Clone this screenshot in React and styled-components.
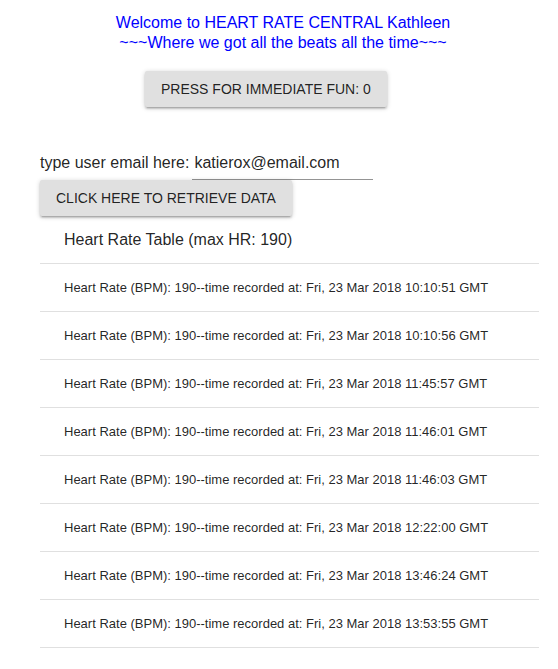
import React, { useState } from 'react';
import styled, { createGlobalStyle } from 'styled-components';

const GlobalStyle = createGlobalStyle`
  body {
    margin: 0;
    background: #ffffff;
    font-family: "Liberation Sans", Arial, sans-serif;
    color: rgba(0, 0, 0, 0.87);
  }
`;

const Page = styled.div`
  display: flex;
  flex-direction: column;
  width: 558px;
  padding-top: 13px;
`;

const Title = styled.div`
  padding-left: 8px;
  text-align: center;
  color: #0000ff;
  font-size: 16px;
  line-height: 20px;
`;

const FunRow = styled.div`
  display: flex;
  padding-left: 145px;
  margin-top: 18px;
`;

const RaisedButton = styled.button`
  height: 36px;
  padding: 0 16px;
  border: none;
  border-radius: 2px;
  background: #e0e0e0;
  color: rgba(0, 0, 0, 0.87);
  font-family: inherit;
  font-size: 14px;
  text-transform: uppercase;
  box-shadow: 0 1px 5px rgba(0, 0, 0, 0.2), 0 2px 2px rgba(0, 0, 0, 0.14),
    0 3px 1px -2px rgba(0, 0, 0, 0.12);
  cursor: pointer;
`;

const Content = styled.div`
  display: flex;
  flex-direction: column;
  align-items: flex-start;
  padding: 0 19px 0 40px;
  margin-top: 46px;
`;

const EmailRow = styled.label`
  display: flex;
  align-items: baseline;
  gap: 3px;
  font-size: 16px;
  line-height: 20px;
`;

const EmailInput = styled.input`
  width: 179px;
  border: none;
  border-bottom: 1px solid rgba(0, 0, 0, 0.42);
  padding: 0 0 6px 2px;
  font-family: inherit;
  font-size: 16px;
  line-height: 20px;
  color: rgba(0, 0, 0, 0.87);
  outline: none;
  background: transparent;
`;

const List = styled.div`
  align-self: stretch;
  display: flex;
  flex-direction: column;
`;

const ListHeader = styled.div`
  display: flex;
  align-items: center;
  padding-left: 24px;
  font-size: 16px;
  height: 48px;
  border-bottom: 1px solid #e0e0e0;
  box-sizing: border-box;
`;

const Row = styled.div`
  display: flex;
  align-items: center;
  height: 48px;
  padding-left: 24px;
  font-size: 13px;
  border-bottom: 1px solid #e0e0e0;
  box-sizing: border-box;
`;

const readings = [
  '10:10:51',
  '10:10:56',
  '11:45:57',
  '11:46:01',
  '11:46:03',
  '12:22:00',
  '13:46:24',
  '13:53:55',
];

export default function App() {
  const [fun, setFun] = useState(0);
  const [email, setEmail] = useState('katierox@email.com');

  return (
    <>
      <GlobalStyle />
      <Page>
        <Title>
          Welcome to HEART RATE CENTRAL Kathleen
          <br />
          ~~~Where we got all the beats all the time~~~
        </Title>
        <FunRow>
          <RaisedButton onClick={() => setFun(fun + 1)}>
            Press for immediate fun: {fun}
          </RaisedButton>
        </FunRow>
        <Content>
          <EmailRow>
            type user email here:
            <EmailInput value={email} onChange={(e) => setEmail(e.target.value)} />
          </EmailRow>
          <RaisedButton>Click here to retrieve data</RaisedButton>
          <List>
            <ListHeader>Heart Rate Table (max HR: 190)</ListHeader>
            {readings.map((t) => (
              <Row key={t}>
                Heart Rate (BPM): 190--time recorded at: Fri, 23 Mar 2018 {t} GMT
              </Row>
            ))}
          </List>
        </Content>
      </Page>
    </>
  );
}
